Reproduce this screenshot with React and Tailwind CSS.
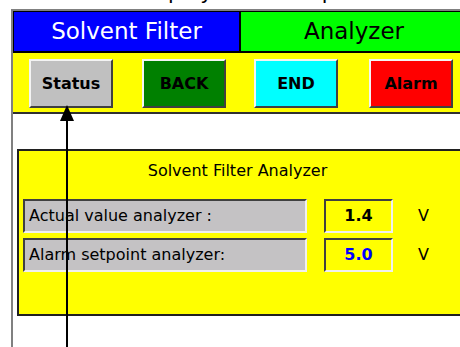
export default function App() {
  const raised =
    'border-2 border-t-[#f4f4f4] border-l-[#f4f4f4] border-b-[#404040] border-r-[#404040]';
  const sunken =
    'border-2 border-t-[#404040] border-l-[#404040] border-b-[#f0f0f0] border-r-[#f0f0f0]';

  return (
    <div className="relative w-[460px] h-[347px] overflow-hidden bg-white text-black font-['DejaVu_Sans',sans-serif]">
      {/* clipped caption above the screen */}
      <div className="h-[9px] overflow-hidden pl-[138px] text-[21px] leading-[21px] whitespace-nowrap">
        <div className="-mt-[18px]">display of the output</div>
      </div>

      <div className="ml-[11px] h-[338px] w-[490px] border-l-2 border-t-2 border-[#808080]">
        {/* header */}
        <div className="flex h-[42px] border-l border-t border-b-2 border-black">
          <div className="flex w-[227px] items-center justify-center border-r-2 border-black bg-[#0000ff] text-[23px] text-white">
            Solvent Filter
          </div>
          <div className="flex w-[226px] items-center justify-center bg-[#00ff00] text-[23px]">
            Analyzer
          </div>
        </div>

        {/* toolbar */}
        <div className="flex h-[61px] items-start border-b-2 border-[#303030] bg-[#ffff00] pt-[6px] text-[16px] font-bold">
          <button className={`ml-[16px] h-[49px] w-[84px] bg-[#c0c0c0] ${raised}`}>Status</button>
          <button className={`ml-[29px] h-[49px] w-[84px] bg-[#008000] ${raised}`}>BACK</button>
          <button className={`ml-[28px] h-[49px] w-[84px] bg-[#00ffff] ${raised}`}>END</button>
          <button className={`ml-[31px] h-[49px] w-[84px] bg-[#ff0000] ${raised}`}>Alarm</button>
        </div>

        {/* analyzer panel */}
        <div className="ml-[4px] mt-[35px] h-[167px] w-[480px] border-2 border-[#202020] bg-[#ffff00]">
          <div className="w-[437px] pt-[10px] text-center text-[16px] leading-[19px]">
            Solvent Filter Analyzer
          </div>
          <div className="mt-[19px] flex flex-col gap-[5px] pl-[4px] text-[16px]">
            <div className="flex items-center">
              <div className={`flex h-[34px] w-[284px] items-center bg-[#c4c2c4] pl-[4px] ${sunken}`}>
                Actual value analyzer :
              </div>
              <div className={`ml-[17px] flex h-[34px] w-[69px] items-center justify-center font-bold ${sunken}`}>
                1.4
              </div>
              <div className="ml-[25px]">V</div>
            </div>
            <div className="flex items-center">
              <div className={`flex h-[34px] w-[284px] items-center bg-[#c4c2c4] pl-[4px] ${sunken}`}>
                Alarm setpoint analyzer:
              </div>
              <div className={`ml-[17px] flex h-[34px] w-[69px] items-center justify-center font-bold text-[#0000ff] ${sunken}`}>
                5.0
              </div>
              <div className="ml-[25px]">V</div>
            </div>
          </div>
        </div>
      </div>

      {/* annotation arrow */}
      <svg className="absolute left-0 top-0" width="460" height="347" viewBox="0 0 460 347">
        <polygon points="67,105 60,121 74,121" fill="#000" />
        <rect x="66" y="120" width="2" height="227" fill="#000" />
      </svg>
    </div>
  );
}
